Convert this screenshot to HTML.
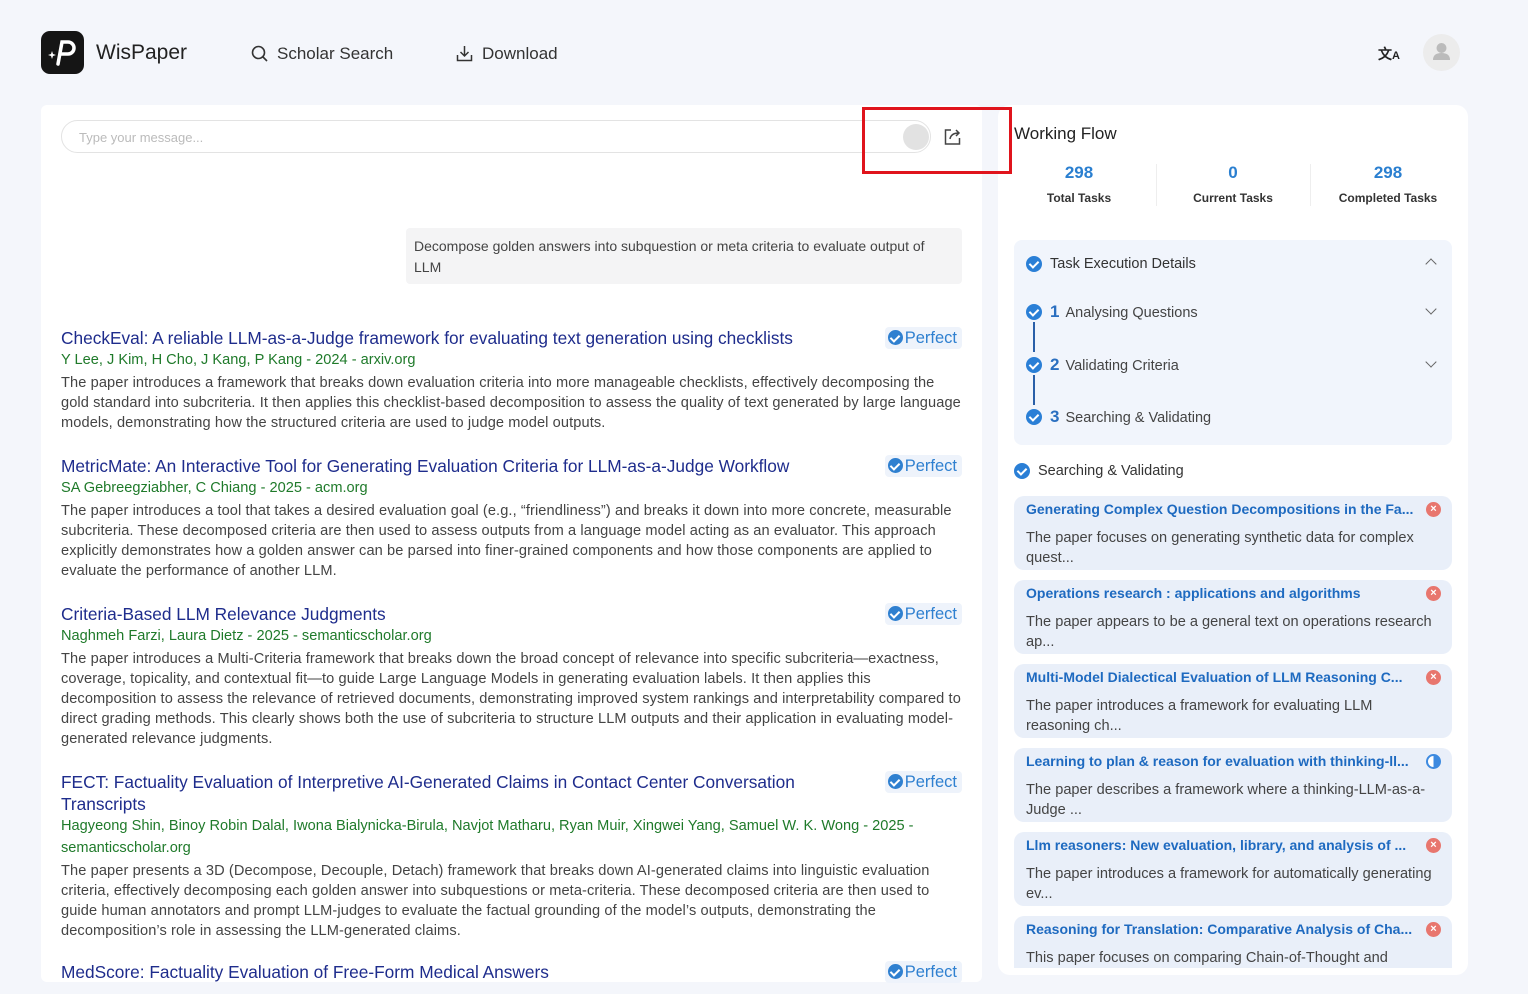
<!DOCTYPE html>
<html><head><meta charset="utf-8"><style>
*{margin:0;padding:0;box-sizing:border-box}
body{width:1528px;height:994px;overflow:hidden;background:#f4f6fb;font-family:"Liberation Sans",sans-serif;position:relative;color:#333}
.abs{position:absolute}
.logo{left:41px;top:31px;width:43px;height:43px;background:#151515;border-radius:9px}
.brand{left:96px;top:41px;font-size:21px;color:#222}
.nav{top:44px;font-size:17px;color:#333}
.left{left:41px;top:105px;width:941px;height:877px;background:#fff;border-radius:6px}
.input{left:61px;top:120px;width:870px;height:33px;border:1px solid #e3e3e3;border-radius:17px;padding:9px 17px;font-size:13px;color:#bbb}
.red{left:862px;top:107px;width:150px;height:67px;border:3px solid #e0141c;z-index:5}
.bubble{left:406px;top:228px;width:556px;height:56px;background:#f4f4f5;border-radius:4px;padding:8px 8px;font-size:14px;line-height:21px;color:#444}
.paper{left:61px;width:901px}
.paper h3{font-weight:normal;font-size:17.3px;color:#1e2c8c;line-height:22px;width:800px}
.paper .au{font-size:14.6px;color:#1f7a2a;line-height:22px}
.paper p{font-size:14.6px;color:#444;line-height:20px;margin-top:2px;letter-spacing:0.1px}
.badge{position:absolute;right:0;top:0;background:#eef3fb;border-radius:4px;padding:1px 5px 1px 3px;font-size:16.5px;color:#2f80d0;line-height:20px}
.badge i{display:inline-block;width:15px;height:15px;border-radius:50%;background:#2f80d0;vertical-align:-2px;margin-right:2px;position:relative}
.badge i:after,.chk:after{content:"";position:absolute;left:4.5px;top:3px;width:4px;height:7px;border:solid #fff;border-width:0 2px 2px 0;transform:rotate(45deg)}
.right{left:998px;top:105px;width:470px;height:870px;background:#fff;border-radius:12px}
.chk{display:inline-block;width:16px;height:16px;border-radius:50%;background:#2a7fd6;position:absolute}
.stat{top:163px;width:150px;text-align:center}
.stat b{display:block;font-size:17px;color:#2a7fd0;line-height:20px}
.stat span{display:block;font-size:12px;font-weight:bold;color:#333;margin-top:8px}
.ted{left:1014px;top:240px;width:438px;height:205px;background:#f1f5fc;border-radius:8px}
.step{font-size:14.5px;color:#444}
.step em{font-style:normal;color:#2a6fc0;font-size:17px;font-weight:bold;margin-right:6px}
.card{left:1014px;width:438px;height:74px;background:#e9eff9;border-radius:10px;padding:0 12px}
.card h4{font-size:14px;color:#1e6ac0;margin-top:5px;line-height:17px;white-space:nowrap}
.card p{font-size:14.6px;color:#444;line-height:20px;margin-top:10px}
.x{position:absolute;right:11px;top:6px;width:15px;height:15px;border-radius:50%;background:#e8766e;color:#fff;font-size:11px;text-align:center;line-height:15px;font-weight:bold}
.chev{position:absolute;width:8px;height:8px;border:solid #666;border-width:0 1.3px 1.3px 0}
</style></head><body>
<div class="abs logo"><svg width="43" height="43" viewBox="0 0 43 43"><path d="M17 33 L21 11 H27 a6 6 0 0 1 0 12 H20" fill="none" stroke="#fff" stroke-width="3.5" stroke-linecap="round"/><path d="M11 20 l1 3 3 1 -3 1 -1 3 -1 -3 -3 -1 3 -1z" fill="#fff"/></svg></div>
<div class="abs brand">WisPaper</div>
<svg class="abs" style="left:251px;top:45px" width="17" height="17" viewBox="0 0 17 17"><circle cx="7.5" cy="7.5" r="6" fill="none" stroke="#333" stroke-width="1.6"/><path d="M12 12 l4 4" stroke="#333" stroke-width="1.6"/></svg>
<div class="abs nav" style="left:277px">Scholar Search</div>
<svg class="abs" style="left:456px;top:45px" width="17" height="17" viewBox="0 0 17 17"><path d="M8.5 1 v10 M4.5 7 l4 4 4-4 M1.5 10 v5.5 h14 V10" fill="none" stroke="#333" stroke-width="1.5"/></svg>
<div class="abs nav" style="left:482px">Download</div>
<div class="abs" style="left:1378px;top:44px;font-size:14px;font-weight:bold;color:#222">文<span style="font-size:11px">A</span></div>
<div class="abs" style="left:1423px;top:34px;width:37px;height:37px;border-radius:50%;background:#ececec"><svg width="37" height="37" viewBox="0 0 37 37"><circle cx="18.5" cy="14" r="5" fill="#bbb"/><path d="M10 26 q0-7 8.5-7 q8.5 0 8.5 7z" fill="#bbb"/></svg></div>

<div class="abs left"></div>
<div class="abs input">Type your message...</div>
<div class="abs" style="left:903px;top:124px;width:26px;height:26px;border-radius:50%;background:#e2e2e2"></div>
<svg class="abs" style="left:943px;top:127px" width="19" height="19" viewBox="0 0 19 19"><path d="M8 3 H2.5 v14 h14 v-6" fill="none" stroke="#444" stroke-width="1.5"/><path d="M7 12 q1-6 9-6 M13 3 l3 3 -3 3" fill="none" stroke="#444" stroke-width="1.5"/></svg>

<div class="abs bubble">Decompose golden answers into subquestion or meta criteria to evaluate output of LLM</div>

<div class="abs paper" style="top:327px"><h3>CheckEval: A reliable LLM-as-a-Judge framework for evaluating text generation using checklists</h3><div class="au">Y Lee, J Kim, H Cho, J Kang, P Kang - 2024 - arxiv.org</div><p>The paper introduces a framework that breaks down evaluation criteria into more manageable checklists, effectively decomposing the gold standard into subcriteria. It then applies this checklist-based decomposition to assess the quality of text generated by large language models, demonstrating how the structured criteria are used to judge model outputs.</p><div class="badge"><i></i>Perfect</div></div>
<div class="abs paper" style="top:455px"><h3>MetricMate: An Interactive Tool for Generating Evaluation Criteria for LLM-as-a-Judge Workflow</h3><div class="au">SA Gebreegziabher, C Chiang - 2025 - acm.org</div><p>The paper introduces a tool that takes a desired evaluation goal (e.g., “friendliness”) and breaks it down into more concrete, measurable subcriteria. These decomposed criteria are then used to assess outputs from a language model acting as an evaluator. This approach explicitly demonstrates how a golden answer can be parsed into finer-grained components and how those components are applied to evaluate the performance of another LLM.</p><div class="badge"><i></i>Perfect</div></div>
<div class="abs paper" style="top:603px"><h3>Criteria-Based LLM Relevance Judgments</h3><div class="au">Naghmeh Farzi, Laura Dietz - 2025 - semanticscholar.org</div><p>The paper introduces a Multi-Criteria framework that breaks down the broad concept of relevance into specific subcriteria—exactness, coverage, topicality, and contextual fit—to guide Large Language Models in generating evaluation labels. It then applies this decomposition to assess the relevance of retrieved documents, demonstrating improved system rankings and interpretability compared to direct grading methods. This clearly shows both the use of subcriteria to structure LLM outputs and their application in evaluating model-generated relevance judgments.</p><div class="badge"><i></i>Perfect</div></div>
<div class="abs paper" style="top:771px"><h3>FECT: Factuality Evaluation of Interpretive AI-Generated Claims in Contact Center Conversation Transcripts</h3><div class="au">Hagyeong Shin, Binoy Robin Dalal, Iwona Bialynicka-Birula, Navjot Matharu, Ryan Muir, Xingwei Yang, Samuel W. K. Wong - 2025 - semanticscholar.org</div><p>The paper presents a 3D (Decompose, Decouple, Detach) framework that breaks down AI-generated claims into linguistic evaluation criteria, effectively decomposing each golden answer into subquestions or meta-criteria. These decomposed criteria are then used to guide human annotators and prompt LLM-judges to evaluate the factual grounding of the model’s outputs, demonstrating the decomposition’s role in assessing the LLM-generated claims.</p><div class="badge"><i></i>Perfect</div></div>
<div class="abs paper" style="top:961px"><h3>MedScore: Factuality Evaluation of Free-Form Medical Answers</h3><div class="badge"><i></i>Perfect</div></div>

<div class="abs right"></div>
<div class="abs red"></div>
<div class="abs" style="left:1014px;top:124px;font-size:17px;color:#222;z-index:6">Working Flow</div>
<div class="abs stat" style="left:1004px"><b>298</b><span>Total Tasks</span></div>
<div class="abs stat" style="left:1158px"><b>0</b><span>Current Tasks</span></div>
<div class="abs stat" style="left:1313px"><b>298</b><span>Completed Tasks</span></div>
<div class="abs" style="left:1156px;top:164px;width:1px;height:42px;background:#eee"></div>
<div class="abs" style="left:1310px;top:164px;width:1px;height:42px;background:#eee"></div>
<div class="abs ted"></div>
<span class="chk" style="left:1026px;top:256px"></span><div class="abs step" style="left:1050px;top:256px;color:#333">Task Execution Details</div>
<div class="chev" style="left:1427px;top:260px;transform:rotate(-135deg)"></div>
<span class="chk" style="left:1026px;top:304px"></span><div class="abs step" style="left:1050px;top:302px"><em>1</em>Analysing Questions</div>
<div class="chev" style="left:1427px;top:305px;transform:rotate(45deg)"></div>
<div class="abs" style="left:1033px;top:322px;width:2px;height:30px;background:#2a5fa8"></div>
<span class="chk" style="left:1026px;top:357px"></span><div class="abs step" style="left:1050px;top:355px"><em>2</em>Validating Criteria</div>
<div class="chev" style="left:1427px;top:358px;transform:rotate(45deg)"></div>
<div class="abs" style="left:1033px;top:375px;width:2px;height:30px;background:#2a5fa8"></div>
<span class="chk" style="left:1026px;top:409px"></span><div class="abs step" style="left:1050px;top:407px"><em>3</em>Searching &amp; Validating</div>
<span class="chk" style="left:1014px;top:463px"></span><div class="abs" style="left:1038px;top:463px;font-size:14.5px;color:#333">Searching &amp; Validating</div>

<div class="abs card" style="top:496px"><h4>Generating Complex Question Decompositions in the Fa...</h4><p>The paper focuses on generating synthetic data for complex quest...</p><div class="x">×</div></div>
<div class="abs card" style="top:580px"><h4>Operations research : applications and algorithms</h4><p>The paper appears to be a general text on operations research ap...</p><div class="x">×</div></div>
<div class="abs card" style="top:664px"><h4>Multi-Model Dialectical Evaluation of LLM Reasoning C...</h4><p>The paper introduces a framework for evaluating LLM reasoning ch...</p><div class="x">×</div></div>
<div class="abs card" style="top:748px"><h4>Learning to plan &amp; reason for evaluation with thinking-ll...</h4><p>The paper describes a framework where a thinking-LLM-as-a-Judge ...</p><div class="x" style="background:linear-gradient(90deg,#fff 50%,#3d8ae0 50%);border:2px solid #3d8ae0"></div></div>
<div class="abs card" style="top:832px"><h4>Llm reasoners: New evaluation, library, and analysis of ...</h4><p>The paper introduces a framework for automatically generating ev...</p><div class="x">×</div></div>
<div class="abs card" style="top:916px;height:52px;border-radius:10px 10px 0 0;overflow:hidden"><h4>Reasoning for Translation: Comparative Analysis of Cha...</h4><p>This paper focuses on comparing Chain-of-Thought and</p><div class="x">×</div></div>
</body></html>
